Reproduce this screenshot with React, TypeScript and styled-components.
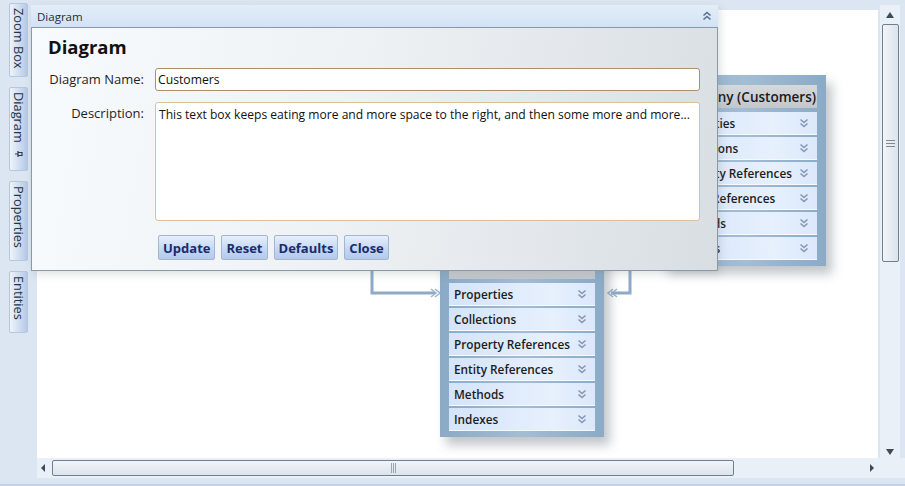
import React from "react"
import styled, { createGlobalStyle } from "styled-components"

const GlobalStyle = createGlobalStyle`
    html, body {
        margin: 0;
        padding: 0;
    }
    body {
        font-family: "Open Sans", "DejaVu Sans", sans-serif;
        background: #dbe5f1;
    }
`

const Shell = styled.div`
    position: relative;
    width: 905px;
    height: 486px;
    overflow: hidden;
    display: grid;
    grid-template-columns: 37px 1fr;
    background: #dce6f2;
    border-bottom: 2px solid #c3d1e2;
    box-sizing: border-box;
`

const TabStrip = styled.div`
    display: flex;
    flex-direction: column;
    gap: 10px;
    padding: 3px 0 0 9px;
`

const SideTab = styled.div<{ $h: number }>`
    writing-mode: vertical-rl;
    width: 19px;
    height: ${(p) => p.$h}px;
    box-sizing: border-box;
    display: flex;
    align-items: center;
    gap: 6px;
    padding-top: 4px;
    font-size: 12.8px;
    color: #243447;
    background: linear-gradient(to right, #eef3fa, #c9d8ee 65%, #b5c9e8);
    border: 1px solid #b7c7da;
    border-radius: 2px;
`

const Main = styled.div`
    display: grid;
    grid-template-columns: 1fr 27px;
    grid-template-rows: 1fr 20px;
    padding-top: 5px;
    height: 478px;
    box-sizing: border-box;
`

const Canvas = styled.div`
    position: relative;
    margin-top: 5px;
    background: #ffffff;
    overflow: hidden;
`

const VScroll = styled.div`
    display: flex;
    flex-direction: column;
    align-items: center;
    width: 20px;
    margin-left: 2px;
    padding-top: 4px;
    background: #eaf0f7;
`

const HScroll = styled.div`
    display: flex;
    align-items: center;
    height: 20px;
    padding: 0;
    background: #eaf0f7;
`

const Arrow = styled.div`
    width: 12px;
    height: 12px;
    display: flex;
    align-items: center;
    justify-content: center;
    flex: none;
`

const VThumb = styled.div`
    width: 17px;
    height: 238px;
    margin-top: 3px;
    box-sizing: border-box;
    border: 1px solid #6f7e90;
    border-radius: 2px;
    background: linear-gradient(to right, #f2f5f9, #dbe3ec);
    display: flex;
    align-items: center;
    justify-content: center;
`

const VTrack = styled.div`
    flex: 1;
`

const HThumb = styled.div`
    width: 682px;
    height: 16px;
    margin-left: 3px;
    box-sizing: border-box;
    border: 1px solid #6f7e90;
    border-radius: 2px;
    background: linear-gradient(#f2f5f9, #dbe3ec);
    display: flex;
    align-items: center;
    justify-content: center;
`

const HTrack = styled.div`
    flex: 1;
`

const Grip = styled.div<{ $vertical?: boolean }>`
    width: ${(p) => (p.$vertical ? "9px" : "5px")};
    height: ${(p) => (p.$vertical ? "7px" : "10px")};
    background: ${(p) =>
        p.$vertical
            ? "repeating-linear-gradient(#7e8a98 0 1px, transparent 1px 3px)"
            : "repeating-linear-gradient(to right, #9aa5b2 0 1px, transparent 1px 2px)"};
`

const Corner = styled.div`
    background: #eaf0f7;
`

/* diagram canvas */

const EntityBox = styled.div<{ $x: number; $y: number }>`
    position: absolute;
    left: ${(p) => p.$x}px;
    top: ${(p) => p.$y}px;
    width: 164px;
    box-sizing: border-box;
    padding: 10px 9px 6px 9px;
    background: linear-gradient(to right, #8aaac6, #a3bdd4 50%, #8aaac6);
    box-shadow: 6px 8px 10px rgba(80, 90, 100, 0.35);
    display: flex;
    flex-direction: column;
    gap: 2px;
`

const EntityHeader = styled.div<{ $align: string; $lift: number }>`
    height: 23px;
    box-sizing: border-box;
    margin-bottom: 2px;
    padding: 0 1px ${(p) => p.$lift}px 1px;
    display: flex;
    align-items: center;
    justify-content: ${(p) => p.$align};
    white-space: nowrap;
    overflow: hidden;
    font-size: 13.5px;
    font-weight: 600;
    color: #1a1a1a;
    background: linear-gradient(#d6d9dc, #c3c7cb);
`

const SectionRow = styled.div`
    height: 23px;
    box-sizing: border-box;
    padding: 0 8px 0 5px;
    display: flex;
    align-items: center;
    justify-content: space-between;
    font-size: 11.8px;
    font-weight: 600;
    color: #1c1c1c;
    white-space: nowrap;
    background: linear-gradient(to right, #d4e4fa, #e7f0fd 70%, #dbe8fb);
    border-bottom: 1px solid #f6f9fd;
`

const Connector = styled.svg`
    position: absolute;
    left: 0;
    top: 0;
    overflow: visible;
`

/* floating panel */

const Panel = styled.div`
    position: absolute;
    left: 31px;
    top: 5px;
    width: 687px;
    height: 266px;
    display: flex;
    flex-direction: column;
    z-index: 5;
    box-shadow: 2px 3px 8px rgba(120, 130, 140, 0.25);
`

const PanelHeader = styled.div`
    height: 22px;
    flex: none;
    display: flex;
    align-items: center;
    justify-content: space-between;
    padding: 0 6px;
    font-size: 11.5px;
    color: #1e2d3d;
    background: linear-gradient(#e4edf9, #d2e2f5);
`

const PanelBody = styled.div`
    flex: 1;
    box-sizing: border-box;
    border: 1px solid #8b98a6;
    padding: 7px 16px 0 16px;
    background: linear-gradient(100deg, #f8fbfd 0%, #eef2f5 45%, #d9dee3 100%);
`

const Heading = styled.h1`
    margin: 0 0 9px 0;
    font-size: 18.5px;
    font-weight: 700;
    color: #111;
    line-height: 24px;
`

const FormGrid = styled.div`
    display: grid;
    grid-template-columns: 96px 545px;
    column-gap: 11px;
    row-gap: 11px;
`

const Label = styled.label`
    text-align: right;
    font-size: 13px;
    color: #1f1f1f;
    padding-top: 2px;
    white-space: nowrap;
`

const TextInput = styled.input`
    height: 23px;
    box-sizing: border-box;
    border: 1px solid #a8916e;
    border-radius: 3px;
    padding: 0 2px;
    font-family: "Open Sans", "DejaVu Sans", sans-serif;
    font-size: 12.2px;
    color: #111;
    background: #fff;
    outline: none;
`

const TextArea = styled.textarea`
    height: 119px;
    box-sizing: border-box;
    border: 1px solid #dcc09a;
    border-radius: 3px;
    padding: 3px 3px;
    resize: none;
    font-family: "Open Sans", "DejaVu Sans", sans-serif;
    font-size: 12.1px;
    line-height: 17px;
    color: #111;
    background: #fff;
    outline: none;
    overflow: hidden;
    white-space: nowrap;
`

const ButtonRow = styled.div`
    display: flex;
    gap: 6px;
    margin: 14px 0 0 110px;
`

const Button = styled.button`
    height: 25px;
    box-sizing: border-box;
    padding: 0 4px;
    border: 1px solid #a3b6d0;
    border-radius: 2px;
    background: linear-gradient(#e6effc, #c5d8f3 55%, #b3caec);
    font-family: "Open Sans", "DejaVu Sans", sans-serif;
    font-size: 13px;
    font-weight: 700;
    color: #1b2b6e;
    cursor: pointer;
`

const DoubleChevron = ({ up, color }: { up?: boolean; color: string }) => (
    <svg width="10" height="10" viewBox="0 0 10 10" style={{ transform: up ? "rotate(180deg)" : undefined }}>
        <path d="M1.5 1.5 L5 4.5 L8.5 1.5 M1.5 5.5 L5 8.5 L8.5 5.5" fill="none" stroke={color} strokeWidth="1.6" />
    </svg>
)

const Pin = () => (
    <svg width="10" height="10" viewBox="0 0 10 10">
        <path d="M1 5 H4 M4 2 V8 M4 3.5 H8 V6.5 H4" fill="none" stroke="#2a3a4c" strokeWidth="1.2" />
    </svg>
)

const sections = ["Properties", "Collections", "Property References", "Entity References", "Methods", "Indexes"]

type EntityProps = { x: number; y: number; title: string; align?: string; lift?: number }

const Entity = ({ x, y, title, align = "flex-end", lift = 0 }: EntityProps) => (
    <EntityBox $x={x} $y={y}>
        <EntityHeader $align={align} $lift={lift}>
            {title}
        </EntityHeader>
        {sections.map((s) => (
            <SectionRow key={s}>
                <span>{s}</span>
                <DoubleChevron color="#8497b4" />
            </SectionRow>
        ))}
    </EntityBox>
)

const Tri = ({ dir }: { dir: "up" | "down" | "left" | "right" }) => {
    const d = {
        up: "M1 8 L5 2 L9 8 Z",
        down: "M1 2 L5 8 L9 2 Z",
        left: "M7 1 L3 5 L7 9 Z",
        right: "M3 1 L7 5 L3 9 Z",
    }[dir]
    return (
        <svg width="10" height="10" viewBox="0 0 10 10">
            <path d={d} fill="#3d4a58" />
        </svg>
    )
}

export default function App() {
    return (
        <>
            <GlobalStyle />
            <Shell>
                <TabStrip>
                    <SideTab $h={74}>Zoom Box</SideTab>
                    <SideTab $h={84}>
                        Diagram
                        <Pin />
                    </SideTab>
                    <SideTab $h={80}>Properties</SideTab>
                    <SideTab $h={62}>Entities</SideTab>
                </TabStrip>
                <Main>
                    <Canvas>
                        <Connector width="1" height="1">
                            <path d="M335 256 V283 H398" fill="none" stroke="#8eaac6" strokeWidth="3" />
                            <path d="M394 279 L399 283 L394 287 M398 279 L403 283 L398 287" fill="none" stroke="#9db6ce" strokeWidth="1.5" />
                            <path d="M593 256 V283 H574" fill="none" stroke="#8eaac6" strokeWidth="3" />
                            <path d="M576 279 L571 283 L576 287 M580 279 L575 283 L580 287" fill="none" stroke="#9db6ce" strokeWidth="1.5" />
                        </Connector>
                        <Entity x={403} y={236} title="Order (Orders)" align="center" lift={9} />
                        <Entity x={625} y={65} title="Company (Customers)" />
                    </Canvas>
                    <VScroll>
                        <Arrow>
                            <Tri dir="up" />
                        </Arrow>
                        <VThumb>
                            <Grip $vertical />
                        </VThumb>
                        <VTrack />
                        <Arrow>
                            <Tri dir="down" />
                        </Arrow>
                    </VScroll>
                    <HScroll>
                        <Arrow>
                            <Tri dir="left" />
                        </Arrow>
                        <HThumb>
                            <Grip />
                        </HThumb>
                        <HTrack />
                        <Arrow>
                            <Tri dir="right" />
                        </Arrow>
                    </HScroll>
                    <Corner />
                </Main>

                <Panel>
                    <PanelHeader>
                        <span>Diagram</span>
                        <DoubleChevron up color="#5a6f8c" />
                    </PanelHeader>
                    <PanelBody>
                        <Heading>Diagram</Heading>
                        <FormGrid>
                            <Label>Diagram Name:</Label>
                            <TextInput defaultValue="Customers" />
                            <Label>Description:</Label>
                            <TextArea defaultValue="This text box keeps eating more and more space to the right, and then some more and more..." />
                        </FormGrid>
                        <ButtonRow>
                            <Button>Update</Button>
                            <Button>Reset</Button>
                            <Button>Defaults</Button>
                            <Button>Close</Button>
                        </ButtonRow>
                    </PanelBody>
                </Panel>
            </Shell>
        </>
    )
}
